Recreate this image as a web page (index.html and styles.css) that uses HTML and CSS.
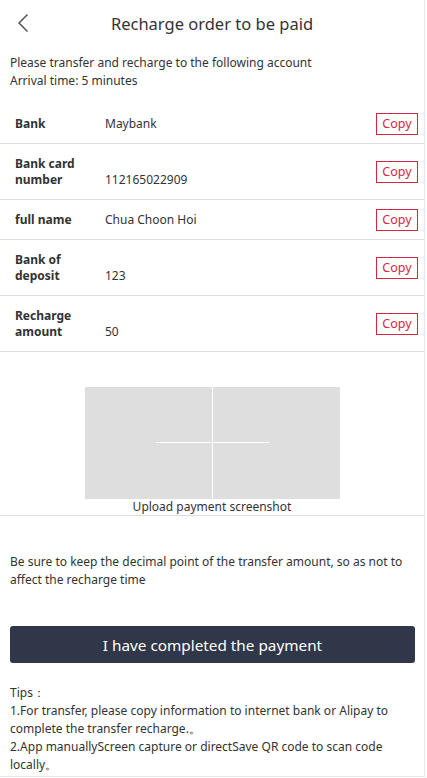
FILE: index.html
```html
<!DOCTYPE html>
<html lang="en">
<head>
<meta charset="utf-8">
<title>Recharge order to be paid</title>
<link rel="stylesheet" href="styles.css">
</head>
<body>
<div class="app">
  <header class="header">
    <span class="back">
      <svg width="12" height="20" viewBox="0 0 12 20"><path d="M10.5 1.5 L2 10 L10.5 18.5" fill="none" stroke="#555" stroke-width="1.5"/></svg>
    </span>
    <h1 class="title">Recharge order to be paid</h1>
  </header>

  <p class="intro">Please transfer and recharge to the following account<br>Arrival time: 5 minutes</p>

  <div class="rows">
    <div class="row">
      <div class="info"><span class="label">Bank</span><span class="value">Maybank</span></div>
      <button class="copy">Copy</button>
    </div>
    <div class="row">
      <div class="info"><span class="label">Bank card number</span><span class="value">112165022909</span></div>
      <button class="copy">Copy</button>
    </div>
    <div class="row">
      <div class="info"><span class="label">full name</span><span class="value">Chua Choon Hoi</span></div>
      <button class="copy">Copy</button>
    </div>
    <div class="row">
      <div class="info"><span class="label">Bank of deposit</span><span class="value">123</span></div>
      <button class="copy">Copy</button>
    </div>
    <div class="row">
      <div class="info"><span class="label">Recharge amount</span><span class="value">50</span></div>
      <button class="copy">Copy</button>
    </div>
  </div>

  <div class="upload">
    <div class="upload-box"><span class="cross-h"></span><span class="cross-v"></span></div>
    <div class="upload-text">Upload payment screenshot</div>
  </div>

  <p class="note">Be sure to keep the decimal point of the transfer amount, so as not to affect the recharge time</p>

  <div class="action"><button class="pay">I have completed the payment</button></div>

  <div class="tips">
    Tips：<br>
    1.For transfer, please copy information to internet bank or Alipay to complete the transfer recharge.。<br>
    2.App manuallyScreen capture or directSave QR code to scan code locally。<br>
    3.After completing the transfer, please click the payment confirmation button and wait for the system.
  </div>
</div>
</body>
</html>
```
FILE: styles.css
```css
html, body {
  margin: 0;
  padding: 0;
  background: #fff;
}
body {
  font-family: "Noto Sans", "Open Sans", sans-serif;
  font-size: 12px;
  color: #333;
}
.app {
  width: 424px;
  height: 776px;
  overflow: hidden;
  border-right: 1px solid #e8e8e8;
  border-bottom: 1px solid #e8e8e8;
  background: #fff;
}
.header {
  position: relative;
  height: 46px;
  display: flex;
  align-items: center;
  justify-content: center;
}
.back {
  position: absolute;
  left: 17px;
  top: 13px;
  display: flex;
}
.title {
  margin: 0;
  font-size: 16.5px;
  font-weight: normal;
  color: #333;
}
.intro {
  margin: 8px 0 0;
  padding: 0 10px;
  line-height: 18px;
}
.rows {
  margin-top: 14px;
}
.row {
  display: flex;
  align-items: center;
  justify-content: space-between;
  padding: 12px 6px 11px 15px;
  border-bottom: 1px solid #ddd;
}
.info {
  display: flex;
  align-items: last baseline;
  line-height: 16px;
}
.label {
  width: 90px;
  font-weight: bold;
}
.value {
  color: #333;
}
.copy {
  font-family: inherit;
  font-size: 12.5px;
  color: #d9263c;
  background: #fff;
  border: 1px solid #d9263c;
  border-radius: 0;
  padding: 0 5px;
  width: 42px;
  height: 22px;
  line-height: 20px;
  margin: -3px 0;
}
.upload {
  padding-top: 35px;
  border-bottom: 1px solid #ddd;
  text-align: center;
}
.upload-box {
  position: relative;
  width: 255px;
  height: 112px;
  margin: 0 auto;
  background: #dedede;
}
.cross-h {
  position: absolute;
  left: 71px;
  top: 55px;
  width: 113px;
  height: 1px;
  background: #fff;
}
.cross-v {
  position: absolute;
  left: 127px;
  top: 0;
  width: 1px;
  height: 112px;
  background: #fff;
}
.upload-text {
  line-height: 16px;
}
.note {
  margin: 37px 0 0;
  padding: 0 10px;
  line-height: 18px;
}
.action {
  padding: 37px 9px 0 10px;
}
.pay {
  display: block;
  width: 100%;
  height: 37px;
  border: 0;
  border-radius: 3px;
  background: #2f3748;
  color: #fff;
  font-family: inherit;
  font-size: 15.3px;
}
.tips {
  margin-top: 21px;
  padding: 0 10px;
  line-height: 18px;
}
```
